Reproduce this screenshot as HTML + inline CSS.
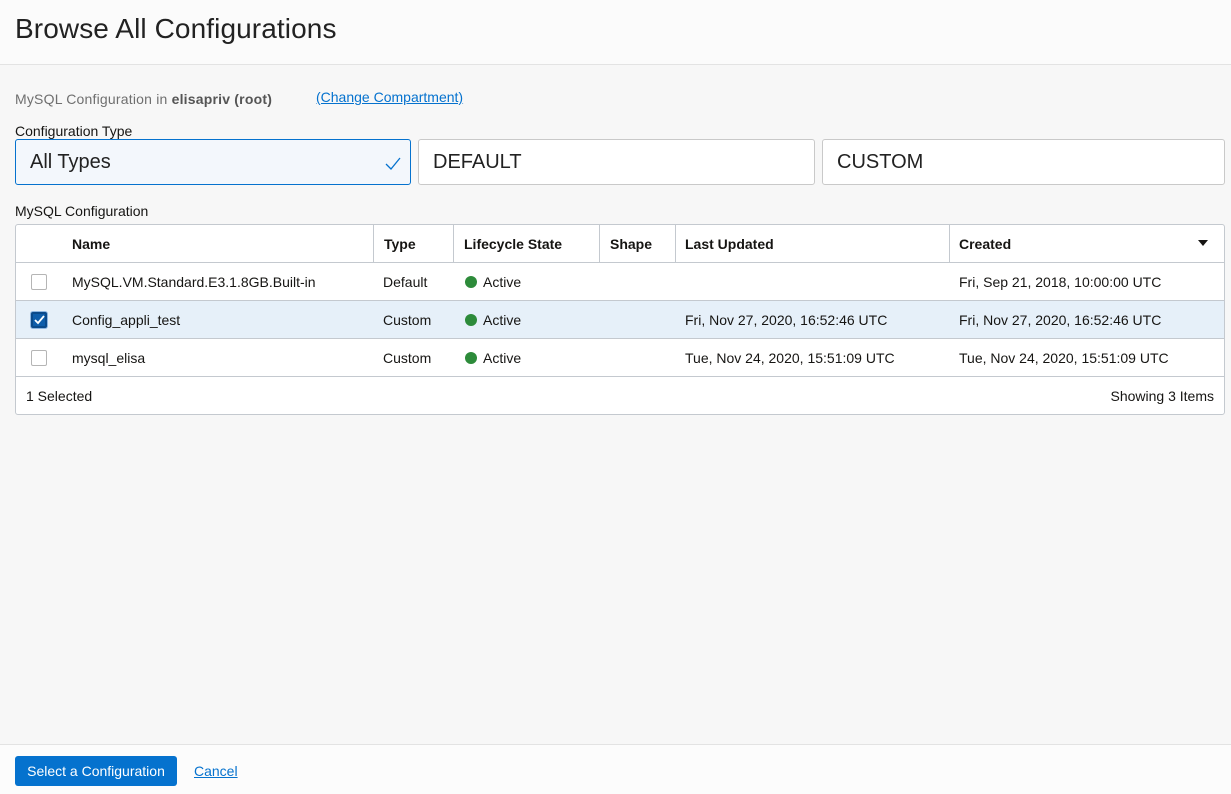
<!DOCTYPE html>
<html><head><style>
*{box-sizing:border-box;margin:0;padding:0}
body{width:1231px;height:794px;background:#f7f7f7;font-family:"Liberation Sans",sans-serif;color:#161513;position:relative;overflow:hidden}
.hdr{position:absolute;left:0;top:0;width:1231px;height:65px;background:#fbfbfb;border-bottom:1px solid #e3e3e3}
.hdr h1{position:absolute;left:15px;top:13px;font-size:28px;font-weight:normal;color:#222;letter-spacing:0.1px}
.abs{position:absolute}
.box{position:absolute;top:139px;height:46px;background:#fff;border:1px solid #c9c9c9;border-radius:3px;font-size:20px;padding:11px 14px;color:#222}
.tw{position:absolute;left:15px;top:224px;width:1210px;height:191px;border:1px solid #c4c9cf;border-radius:3px;background:#fff;overflow:hidden}
.row{position:absolute;left:0;width:1208px;height:38px;border-bottom:1px solid #c4c9cf;font-size:14px}
.row span{position:absolute;top:11px}
.hd span{font-weight:bold}
.vl{position:absolute;top:0;height:38px;border-left:1px solid #c4c9cf}
.cb{position:absolute;left:15px;top:11px;width:16px;height:16px;border:1px solid #b5b5b5;border-radius:2px;background:#fff}
.dot{display:inline-block;width:12px;height:12px;border-radius:50%;background:#2d8b3a;vertical-align:-1px;margin-right:6px}
</style></head><body>
<div class="hdr"><h1>Browse All Configurations</h1></div>
<div class="abs" style="left:15px;top:91px;font-size:14px;color:#6f6f6f;letter-spacing:0.2px">MySQL Configuration in <b style="color:#555">elisapriv (root)</b></div>
<div class="abs" style="left:316px;top:89px;font-size:14px;color:#0572ce;text-decoration:underline">(Change Compartment)</div>
<div class="abs" style="left:15px;top:123px;font-size:14px">Configuration Type</div>
<div class="box" style="left:15px;width:396px;background:#f3f7fc;border-color:#0572ce">All Types<svg style="position:absolute;right:9px;top:17px" width="16" height="14" viewBox="0 0 16 14"><path d="M1 7l5 5 9-11" fill="none" stroke="#0572ce" stroke-width="1.3"/></svg></div>
<div class="box" style="left:418px;width:397px">DEFAULT</div>
<div class="box" style="left:822px;width:403px">CUSTOM</div>
<div class="abs" style="left:15px;top:203px;font-size:14px">MySQL Configuration</div>
<div class="tw">
<div class="row hd" style="top:0">
<span style="left:56px">Name</span><div class="vl" style="left:357px"></div>
<span style="left:368px">Type</span><div class="vl" style="left:437px"></div>
<span style="left:448px">Lifecycle State</span><div class="vl" style="left:583px"></div>
<span style="left:594px">Shape</span><div class="vl" style="left:659px"></div>
<span style="left:669px">Last Updated</span><div class="vl" style="left:933px"></div>
<span style="left:943px">Created</span>
<svg style="position:absolute;left:1182px;top:15px" width="10" height="6"><path d="M0 0h10L5 6z" fill="#161513"/></svg>
</div>
<div class="row" style="top:38px"><div class="cb"></div>
<span style="left:56px">MySQL.VM.Standard.E3.1.8GB.Built-in</span><span style="left:367px">Default</span><span style="left:449px"><i class="dot"></i>Active</span><span style="left:943px">Fri, Sep 21, 2018, 10:00:00 UTC</span></div>
<div class="row" style="top:76px;background:#e6f0f9"><div class="cb" style="background:#0e5daa;border:2px solid #0b4a8a;box-shadow:0 0 0 1px #8fb6e0"><svg style="position:absolute;left:1px;top:1px" width="11" height="10" viewBox="0 0 11 10"><path d="M1 5l3 3 6-7" fill="none" stroke="#fff" stroke-width="1.8"/></svg></div>
<span style="left:56px">Config_appli_test</span><span style="left:367px">Custom</span><span style="left:449px"><i class="dot"></i>Active</span><span style="left:669px">Fri, Nov 27, 2020, 16:52:46 UTC</span><span style="left:943px">Fri, Nov 27, 2020, 16:52:46 UTC</span></div>
<div class="row" style="top:114px"><div class="cb"></div>
<span style="left:56px">mysql_elisa</span><span style="left:367px">Custom</span><span style="left:449px"><i class="dot"></i>Active</span><span style="left:669px">Tue, Nov 24, 2020, 15:51:09 UTC</span><span style="left:943px">Tue, Nov 24, 2020, 15:51:09 UTC</span></div>
<div class="row" style="top:152px;border:none"><span style="left:10px">1 Selected</span><span style="right:10px">Showing 3 Items</span></div>
</div>
<div class="abs" style="left:0;top:744px;width:1231px;height:50px;background:#fcfcfc;border-top:1px solid #e3e3e3"></div>
<div class="abs" style="left:15px;top:756px;width:162px;height:30px;background:#0572ce;border-radius:3px;color:#fff;font-size:14px;text-align:center;line-height:30px">Select a Configuration</div>
<div class="abs" style="left:194px;top:763px;font-size:14px;color:#0572ce;text-decoration:underline">Cancel</div>
</body></html>
